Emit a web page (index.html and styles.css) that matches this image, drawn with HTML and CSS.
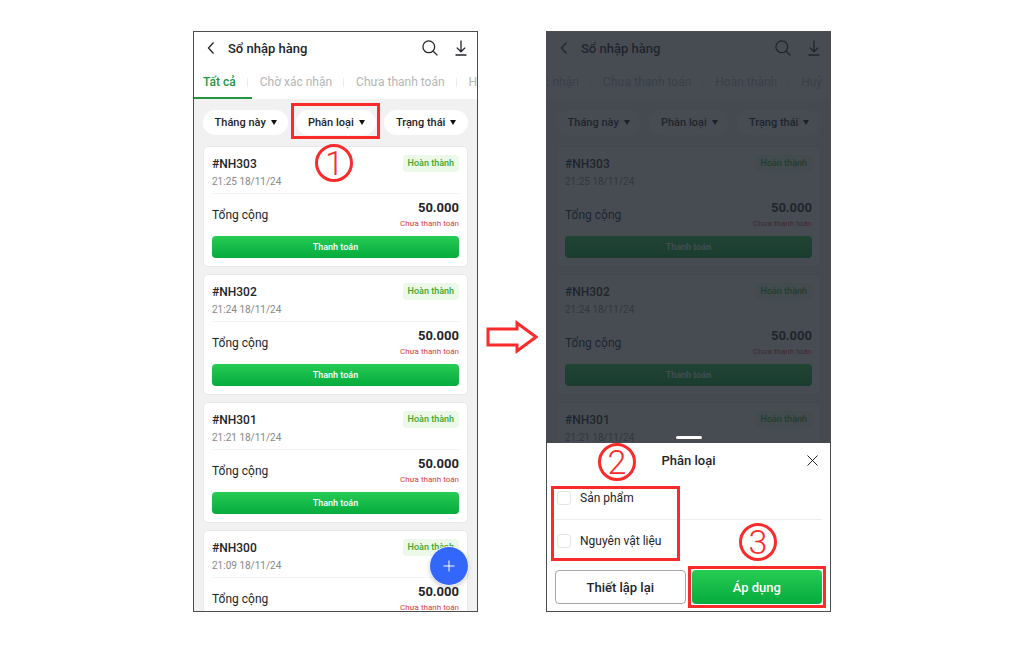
FILE: index.html
```html
<!DOCTYPE html>
<html lang="vi">

<head>
  <meta charset="UTF-8">
  <meta name="viewport" content="width=device-width, initial-scale=1.0">
  <title>Sổ nhập hàng - Lọc theo phân loại</title>
  <link rel="stylesheet" href="styles.css">
</head>

<body>
  <main class="guide">
    <!-- Step 1: open the filter -->
    <section class="phone">
      <header class="topbar">
        <button class="icon-btn" aria-label="Quay lại"><svg width="8" height="14" viewBox="0 0 8 14"><path d="M6.5 1.5 1.5 7l5 5.5"/></svg></button>
        <h1>Sổ nhập hàng</h1>
        <button class="icon-btn" aria-label="Tìm kiếm"><svg width="16" height="16" viewBox="0 0 16 16"><circle cx="6.8" cy="6.8" r="5.9"/><path d="m11.2 11.2 4.2 4.2"/></svg></button>
        <button class="icon-btn" aria-label="Tải xuống"><svg width="12" height="16" viewBox="0 0 12 16"><path d="M6 .5v11M1.8 7.6 6 11.8l4.2-4.2M.5 15h11"/></svg></button>
      </header>
      <nav class="tabs">
        <a href="#" class="active">Tất cả</a>
        <a href="#">Chờ xác nhận</a>
        <a href="#">Chưa thanh toán</a>
        <a href="#">Hoàn thành</a>
      </nav>
      <div class="filters">
        <button class="chip">Tháng này <span class="caret"></span></button>
        <div class="chip-wrap">
          <button class="chip">Phân loại <span class="caret"></span></button>
          <span class="frame frame-chip"></span>
          <span class="step step-1">1</span>
        </div>
        <button class="chip">Trạng thái <span class="caret"></span></button>
      </div>
      <div class="orders">
        <article class="card">
          <div class="row"><h2>#NH303</h2><span class="badge">Hoàn thành</span></div>
          <time>21:25 18/11/24</time>
          <div class="total"><span>Tổng cộng</span><div class="sum"><strong>50.000</strong><em>Chưa thanh toán</em></div></div>
          <button class="pay">Thanh toán</button>
        </article>
        <article class="card">
          <div class="row"><h2>#NH302</h2><span class="badge">Hoàn thành</span></div>
          <time>21:24 18/11/24</time>
          <div class="total"><span>Tổng cộng</span><div class="sum"><strong>50.000</strong><em>Chưa thanh toán</em></div></div>
          <button class="pay">Thanh toán</button>
        </article>
        <article class="card">
          <div class="row"><h2>#NH301</h2><span class="badge">Hoàn thành</span></div>
          <time>21:21 18/11/24</time>
          <div class="total"><span>Tổng cộng</span><div class="sum"><strong>50.000</strong><em>Chưa thanh toán</em></div></div>
          <button class="pay">Thanh toán</button>
        </article>
        <article class="card">
          <div class="row"><h2>#NH300</h2><span class="badge">Hoàn thành</span></div>
          <time>21:09 18/11/24</time>
          <div class="total"><span>Tổng cộng</span><div class="sum"><strong>50.000</strong><em>Chưa thanh toán</em></div></div>
        </article>
      </div>
      <button class="fab" aria-label="Thêm"><svg width="12" height="12" viewBox="0 0 12 12"><path d="M6 .5v11M.5 6h11"/></svg></button>
    </section>

    <svg class="arrow" width="52" height="34" viewBox="0 0 52 34"><path d="M2 9h29V3l19 14-19 14v-6H2z"/></svg>

    <!-- Step 2 and 3: choose a type and apply -->
    <section class="phone">
      <header class="topbar">
        <button class="icon-btn" aria-label="Quay lại"><svg width="8" height="14" viewBox="0 0 8 14"><path d="M6.5 1.5 1.5 7l5 5.5"/></svg></button>
        <h1>Sổ nhập hàng</h1>
        <button class="icon-btn" aria-label="Tìm kiếm"><svg width="16" height="16" viewBox="0 0 16 16"><circle cx="6.8" cy="6.8" r="5.9"/><path d="m11.2 11.2 4.2 4.2"/></svg></button>
        <button class="icon-btn" aria-label="Tải xuống"><svg width="12" height="16" viewBox="0 0 12 16"><path d="M6 .5v11M1.8 7.6 6 11.8l4.2-4.2M.5 15h11"/></svg></button>
      </header>
      <nav class="tabs tabs-end">
        <a href="#">Chờ xác nhận</a>
        <a href="#">Chưa thanh toán</a>
        <a href="#">Hoàn thành</a>
        <a href="#">Huỷ</a>
      </nav>
      <div class="filters">
        <button class="chip">Tháng này <span class="caret"></span></button>
        <div class="chip-wrap"><button class="chip">Phân loại <span class="caret"></span></button></div>
        <button class="chip">Trạng thái <span class="caret"></span></button>
      </div>
      <div class="orders">
        <article class="card">
          <div class="row"><h2>#NH303</h2><span class="badge">Hoàn thành</span></div>
          <time>21:25 18/11/24</time>
          <div class="total"><span>Tổng cộng</span><div class="sum"><strong>50.000</strong><em>Chưa thanh toán</em></div></div>
          <button class="pay">Thanh toán</button>
        </article>
        <article class="card">
          <div class="row"><h2>#NH302</h2><span class="badge">Hoàn thành</span></div>
          <time>21:24 18/11/24</time>
          <div class="total"><span>Tổng cộng</span><div class="sum"><strong>50.000</strong><em>Chưa thanh toán</em></div></div>
          <button class="pay">Thanh toán</button>
        </article>
        <article class="card">
          <div class="row"><h2>#NH301</h2><span class="badge">Hoàn thành</span></div>
          <time>21:21 18/11/24</time>
        </article>
      </div>

      <div class="backdrop"></div>
      <form class="sheet">
        <div class="sheet-head">
          <h2>Phân loại</h2>
          <button type="button" class="close" aria-label="Đóng"><svg width="11" height="11" viewBox="0 0 11 11"><path d="m.5.5 10 10M10.5.5l-10 10"/></svg></button>
          <span class="step step-2">2</span>
        </div>
        <div class="options">
          <label class="option"><input type="checkbox" name="product">Sản phẩm</label>
          <label class="option"><input type="checkbox" name="material">Nguyên vật liệu</label>
          <span class="frame frame-options"></span>
        </div>
        <div class="actions">
          <button type="reset" class="btn">Thiết lập lại</button>
          <div class="apply">
            <button type="button" class="btn btn-primary">Áp dụng</button>
            <span class="frame frame-apply"></span>
            <span class="step step-3">3</span>
          </div>
        </div>
      </form>
    </section>
  </main>
</body>

</html>
```
FILE: styles.css
```css
* {
  box-sizing: border-box;
}

body {
  margin: 0;
  background: #fff;
  color: #222428;
  font-family: Roboto, Arial, sans-serif;
}

h1,
h2 {
  margin: 0;
  font-weight: 500;
}

button {
  padding: 0;
  border: none;
  background: none;
  color: inherit;
  font-family: inherit;
  cursor: pointer;
}

svg {
  display: block;
  fill: none;
  stroke: currentColor;
}

.guide {
  display: grid;
  grid-template-columns: 1fr 68px 1fr;
  align-items: center;
  max-width: 638px;
  margin: 0 auto;
  padding: 31px 0 35px;
}

.phone {
  position: relative;
  height: calc(100vh - 66px);
  min-height: 400px;
  overflow: hidden;
  border: 1px solid #4c4c4e;
  background: #f1f1f1;
}

.arrow {
  justify-self: center;
  margin-top: 30px;
  stroke: #f92b2b;
  stroke-width: 3;
}

/* header */
.topbar {
  display: flex;
  align-items: center;
  gap: 17px;
  height: 32px;
  padding: 0 10px 0 13px;
  background: #fff;
}

.topbar h1 {
  flex: 1;
  margin-left: -4px;
  font-size: 13px;
}

.icon-btn svg {
  stroke-width: 1.3;
}

.tabs {
  display: flex;
  height: 35px;
  padding-left: 9px;
  overflow: hidden;
  background: #fff;
  font-size: 12px;
  line-height: 37px;
  white-space: nowrap;
}

.tabs-end {
  justify-content: flex-end;
  padding: 0 8px 0 0;
}

.tabs a {
  position: relative;
  margin-right: 24px;
  color: #b4b6b8;
  text-decoration: none;
}

.tabs-end a:last-child {
  margin-right: 0;
}

.tabs a:not(:last-child)::after {
  content: "";
  position: absolute;
  top: 14px;
  right: -12px;
  width: 1px;
  height: 9px;
  background: #ececec;
}

.tabs .active {
  color: #24963f;
  font-weight: 500;
}

.tabs .active::before {
  content: "";
  position: absolute;
  left: -9px;
  right: -16px;
  top: 33px;
  height: 2px;
  background: #24963f;
}

/* filters */
.filters {
  display: flex;
  gap: 8px;
  padding: 11px 9px;
}

.filters > * {
  flex: 1 0 auto;
}

.chip-wrap {
  position: relative;
}

.chip {
  display: flex;
  align-items: center;
  justify-content: center;
  gap: 5px;
  height: 25px;
  padding: 0 11px;
  border-radius: 13px;
  background: #fff;
  font-size: 11px;
  font-weight: 500;
}

.chip-wrap .chip {
  width: 100%;
}

.caret {
  border: 3px solid transparent;
  border-top: 5px solid #111;
  border-bottom: 0;
}

/* orders */
.orders {
  display: grid;
  gap: 7px;
  padding: 0 9px;
}

.card {
  height: 121px;
  padding: 8px;
  border: 1px solid #e9e9e9;
  border-radius: 5px;
  background: #fff;
}

.row,
.total {
  display: flex;
  align-items: center;
  justify-content: space-between;
}

.card h2 {
  font-size: 12px;
}

.badge {
  padding: 0 5px;
  border-radius: 4px;
  background: #ecf9e9;
  color: #3da52c;
  font-size: 9px;
  font-weight: 500;
  line-height: 17px;
}

.card time {
  display: block;
  padding: 4px 0 5px;
  border-bottom: 1px solid #f3f3f3;
  color: #85888c;
  font-size: 10px;
  line-height: 12px;
}

.total {
  height: 42px;
  font-size: 12px;
}

.sum {
  display: grid;
  text-align: right;
}

.sum strong {
  font-size: 13px;
  font-weight: 700;
  line-height: 17px;
}

.sum em {
  color: #d83c3c;
  font-size: 8px;
  font-style: normal;
  line-height: 15px;
}

.pay {
  display: block;
  width: 100%;
  height: 22px;
  border-radius: 4px;
  background: linear-gradient(#27cc55, #05ab3c);
  color: #fff;
  font-size: 9px;
  font-weight: 500;
}

.fab {
  position: absolute;
  right: 9px;
  bottom: 26px;
  display: grid;
  place-items: center;
  width: 38px;
  height: 38px;
  border-radius: 50%;
  background: #3366fb;
  color: #fff;
  box-shadow: 0 0 0 1px #eef2ff, 0 2px 4px rgba(0, 0, 0, 0.25);
}

/* filter sheet */
.backdrop {
  position: absolute;
  inset: 0;
  background: rgba(30, 36, 45, 0.82);
}

.sheet {
  position: absolute;
  left: 0;
  right: 0;
  bottom: 0;
  padding: 0 8px 7px;
  background: #fff;
}

.sheet::before {
  content: "";
  position: absolute;
  top: -7px;
  left: 50%;
  width: 26px;
  height: 3px;
  margin-left: -13px;
  border-radius: 2px;
  background: #fff;
}

.sheet-head {
  position: relative;
  display: grid;
  grid-template-columns: 1fr auto 1fr;
  align-items: center;
  height: 34px;
}

.sheet-head h2 {
  grid-column: 2;
  font-size: 13px;
}

.close {
  justify-self: end;
  margin-right: 4px;
}

.options {
  position: relative;
}

.option {
  display: flex;
  align-items: center;
  gap: 9px;
  height: 42px;
  padding-left: 2px;
  font-size: 12px;
}

.option + .option {
  height: 43px;
  border-top: 1px solid #eee;
}

.option input {
  appearance: none;
  width: 14px;
  height: 14px;
  margin: 0;
  border: 1px solid #e2e4e6;
  border-radius: 3px;
  background: #fff;
}

.actions {
  display: grid;
  grid-template-columns: 1fr 1fr;
  gap: 6px;
  padding-top: 8px;
}

.btn {
  width: 100%;
  height: 34px;
  border: 1px solid #a5a7aa;
  border-radius: 4px;
  font-size: 13px;
  font-weight: 500;
}

.btn-primary {
  border: none;
  background: linear-gradient(#27cc55, #05ab3c);
  color: #fff;
}

.apply {
  position: relative;
}

/* guide marks */
.frame {
  position: absolute;
  border: 3px solid #f92b2b;
  pointer-events: none;
}

.frame-chip {
  inset: -7px -4px -4px -5px;
}

.frame-options {
  top: 9px;
  bottom: 1px;
  left: -4px;
  width: 129px;
}

.frame-apply {
  inset: -4px;
}

.step {
  position: absolute;
  z-index: 1;
  width: 38px;
  height: 38px;
  border: 3px solid #f92b2b;
  border-radius: 50%;
  color: #f92b2b;
  font-size: 34px;
  font-weight: 300;
  line-height: 32px;
  text-align: center;
}

.step-1 {
  top: 34px;
  left: 50%;
  margin-left: -21px;
}

.step-2 {
  top: 0;
  left: 43px;
}

.step-3 {
  right: 45px;
  bottom: 43px;
}
```
